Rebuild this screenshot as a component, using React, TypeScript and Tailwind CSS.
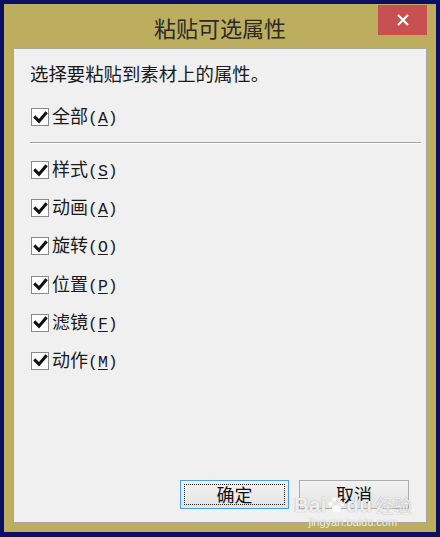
import React from "react";

const OPTIONS: { label: string; key: string }[] = [
  { label: "样式", key: "S" },
  { label: "动画", key: "A" },
  { label: "旋转", key: "O" },
  { label: "位置", key: "P" },
  { label: "滤镜", key: "F" },
  { label: "动作", key: "M" },
];

function CheckRow({ label, hotkey }: { label: string; hotkey: string }) {
  return (
    <label className="flex items-center h-6 ml-[17px]">
      <span className="flex items-center justify-center w-[18px] h-[18px] bg-white border border-[#8a8a8a]">
        <svg viewBox="0 0 14 14" className="w-[15px] h-[15px]">
          <path d="M2.2 7 L5.6 10.4 L11.8 3.2" fill="none" stroke="#111" strokeWidth="2.9" strokeLinecap="square" />
        </svg>
      </span>
      <span className="ml-[3px] text-[18px] leading-6 text-[#1a1a1a]">
        {label}
        <span className="font-['Liberation_Mono',monospace] text-[16.5px]">
          (<span className="underline underline-offset-2">{hotkey}</span>)
        </span>
      </span>
    </label>
  );
}

export default function App() {
  return (
    <div className="w-[440px] h-[537px] bg-[#0b1062] pt-[4px] px-[4px] pb-[5px] font-['Noto_Sans_CJK_SC',sans-serif]">
      <div className="relative flex flex-col h-full bg-[#bcae5e] px-[9px] pb-[9px]">
        {/* title bar */}
        <div className="grid grid-cols-[49px_1fr_49px] h-[44px]">
          <div />
          <div className="flex items-center justify-center pt-[2px] text-[22px] text-[#2a2a2a]">
            粘贴可选属性
          </div>
          <div className="mt-[1px] h-[30px] bg-[#c75050] flex items-center justify-center">
            <svg viewBox="0 0 12 12" className="w-[12px] h-[12px]">
              <path d="M1 1 L11 11 M11 1 L1 11" stroke="#fff" strokeWidth="2.2" />
            </svg>
          </div>
        </div>

        {/* body */}
        <div className="flex-1 flex flex-col bg-[#f0f0f0] border border-[#a9a9a0] pt-[12px] pb-[13px]">
          <p className="ml-[16px] text-[18.4px] leading-6 text-[#1a1a1a]">选择要粘贴到素材上的属性。</p>

          <div className="mt-[20px]">
            <CheckRow label="全部" hotkey="A" />
          </div>

          <div className="mt-[13px] ml-[16px] mr-[5px] h-[2px] border-t border-[#a0a0a0] border-b border-b-white" />

          <div className="mt-[14px] flex flex-col gap-[14.2px]">
            {OPTIONS.map((o) => (
              <CheckRow key={o.label} label={o.label} hotkey={o.key} />
            ))}
          </div>

          <div className="flex-1" />

          <div className="flex justify-end gap-[10px] pr-[17px]">
            <button
              type="button"
              className="relative w-[109px] h-[29px] border border-[#4a9cf0] bg-linear-to-b from-[#f2f2f2] to-[#e3e3e3] text-[18px] text-[#111] flex items-center justify-center"
            >
              <span className="absolute inset-[3px] border border-dotted border-[#222]" />
              确定
            </button>
            <button
              type="button"
              className="w-[110px] h-[29px] border border-[#acacac] bg-linear-to-b from-[#f2f2f2] to-[#e3e3e3] text-[18px] text-[#111] flex items-center justify-center"
            >
              取消
            </button>
          </div>
        </div>

        {/* watermark */}
        <div className="absolute right-[24px] bottom-[3px] flex flex-col items-center text-white/85 pointer-events-none">
          <div className="flex items-center text-[21px] font-bold leading-none [text-shadow:0_0_1px_#888]">
            <span className="font-['Liberation_Sans',sans-serif]">Bai</span>
            <svg viewBox="0 0 20 20" className="w-[18px] h-[18px] mx-[1px]">
              <circle cx="4" cy="9" r="2.4" fill="rgba(255,255,255,0.9)" />
              <circle cx="8" cy="4" r="2.4" fill="rgba(255,255,255,0.9)" />
              <circle cx="13" cy="4" r="2.4" fill="rgba(255,255,255,0.9)" />
              <circle cx="17" cy="9" r="2.4" fill="rgba(255,255,255,0.9)" />
              <ellipse cx="10.5" cy="14" rx="5" ry="4" fill="rgba(255,255,255,0.9)" />
            </svg>
            <span className="font-['Liberation_Sans',sans-serif]">du</span>
            <span className="ml-[4px] text-[18px] font-normal">经验</span>
          </div>
          <div className="text-[11px] leading-[14px] font-['Liberation_Sans',sans-serif] text-white/85 [text-shadow:0_0_1px_#999]">
            jingyan.baidu.com
          </div>
        </div>
      </div>
    </div>
  );
}
